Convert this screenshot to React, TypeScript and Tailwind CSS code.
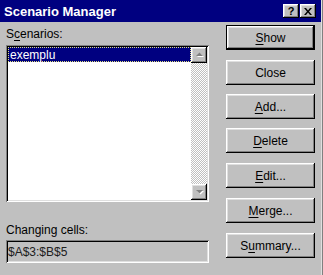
import React from 'react'

const raised =
  'shadow-[inset_-1px_-1px_#000000,inset_1px_1px_#ffffff,inset_-2px_-2px_#808080,inset_2px_2px_#dfdfdf]'
const sunken =
  'shadow-[inset_1px_1px_#808080,inset_-1px_-1px_#ffffff,inset_2px_2px_#000000,inset_-2px_-2px_#dfdfdf]'

function Btn({
  label,
  hot,
  isDefault,
  className,
}: {
  label: string
  hot?: number
  isDefault?: boolean
  className?: string
}) {
  const text =
    hot === undefined ? (
      label
    ) : (
      <>
        {label.slice(0, hot)}
        <span className="underline underline-offset-[2px]">{label[hot]}</span>
        {label.slice(hot + 1)}
      </>
    )
  return (
    <div
      className={`flex h-[25px] w-[89px] items-center justify-center text-[12px] text-black ${className ?? ''} ${
        isDefault ? 'border border-black' : ''
      }`}
    >
      <div className={`flex h-full w-full items-center justify-center ${raised}`}>{text}</div>
    </div>
  )
}

function Arrow({ up }: { up?: boolean }) {
  return (
    <div className={`flex h-[16px] w-[16px] items-center justify-center bg-[#c0c0c0] ${raised}`}>
      <svg width="9" height="6" viewBox="0 0 9 6">
        {up ? (
          <>
            <path d="M2 5h7L5.5 1.5z" fill="#ffffff" />
            <path d="M1 4h7L4.5 0.5z" fill="#808080" />
          </>
        ) : (
          <>
            <path d="M2 2h7L5.5 5.5z" fill="#ffffff" />
            <path d="M1 1h7L4.5 4.5z" fill="#808080" />
          </>
        )}
      </svg>
    </div>
  )
}

export default function App() {
  return (
    <div
      className="relative h-[275px] w-[323px] overflow-hidden bg-[#c0c0c0] select-none"
      style={{ fontFamily: '"Liberation Sans", Arial, sans-serif' }}
    >
      {/* title bar */}
      <div className="flex h-[22px] w-[321px] items-center bg-[#000080] pl-[4px]">
        <span className="text-[13px] font-bold leading-none text-white">Scenario Manager</span>
        <div className="ml-auto mr-[5px] flex items-center">
          <div className={`flex h-[14px] w-[16px] items-center justify-center bg-[#c0c0c0] ${raised}`}>
            <span className="text-[11px] font-bold leading-none text-black">?</span>
          </div>
          <div className={`ml-[1px] flex h-[14px] w-[16px] items-center justify-center bg-[#c0c0c0] ${raised}`}>
            <svg width="8" height="7" viewBox="0 0 8 7">
              <path d="M0 0h2l2 2.5L6 0h2L5 3.5 8 7H6L4 4.5 2 7H0l3-3.5z" fill="#000000" />
            </svg>
          </div>
        </div>
      </div>
      <div className="absolute right-0 top-0 h-full w-[2px] border-l border-[#dfdfdf] bg-[#808080]" />

      <div className="flex">
        {/* left column */}
        <div className="flex w-[226px] flex-col pl-[6px] pt-[5px] text-[12px] text-black">
          <div className="h-[14px] leading-[14px]">
            S<span className="underline underline-offset-[2px]">c</span>enarios:
          </div>
          <div className={`mt-[4px] flex h-[157px] w-[203px] bg-white p-[2px] ${sunken}`}>
            <div className="flex-1">
              <div className="flex h-[15px] items-center border border-dotted border-[#e0e080] bg-[#000080] pl-[1px] text-white">
                exemplu
              </div>
            </div>
            <div className="flex w-[16px] flex-col">
              <Arrow up />
              <div className="flex-1 bg-[image:repeating-conic-gradient(#c0c0c0_0_25%,#ffffff_0_50%)] bg-[length:2px_2px]" />
              <Arrow />
            </div>
          </div>
          <div className="mt-[21px] h-[14px] leading-[14px]">Changing cells:</div>
          <div className={`mt-[3px] flex h-[23px] w-[203px] items-center pl-[2px] text-[#202020] ${sunken}`}>
            $A$3:$B$5
          </div>
        </div>

        {/* buttons */}
        <div className="flex flex-col pt-[3px]">
          <Btn label="Show" hot={0} isDefault />
          <Btn label="Close" className="mt-[10px]" />
          <Btn label="Add..." hot={0} className="mt-[9px]" />
          <Btn label="Delete" hot={0} className="mt-[9px]" />
          <Btn label="Edit..." hot={0} className="mt-[10px]" />
          <Btn label="Merge..." hot={0} className="mt-[10px]" />
          <Btn label="Summary..." hot={1} className="mt-[10px]" />
        </div>
      </div>
    </div>
  )
}
